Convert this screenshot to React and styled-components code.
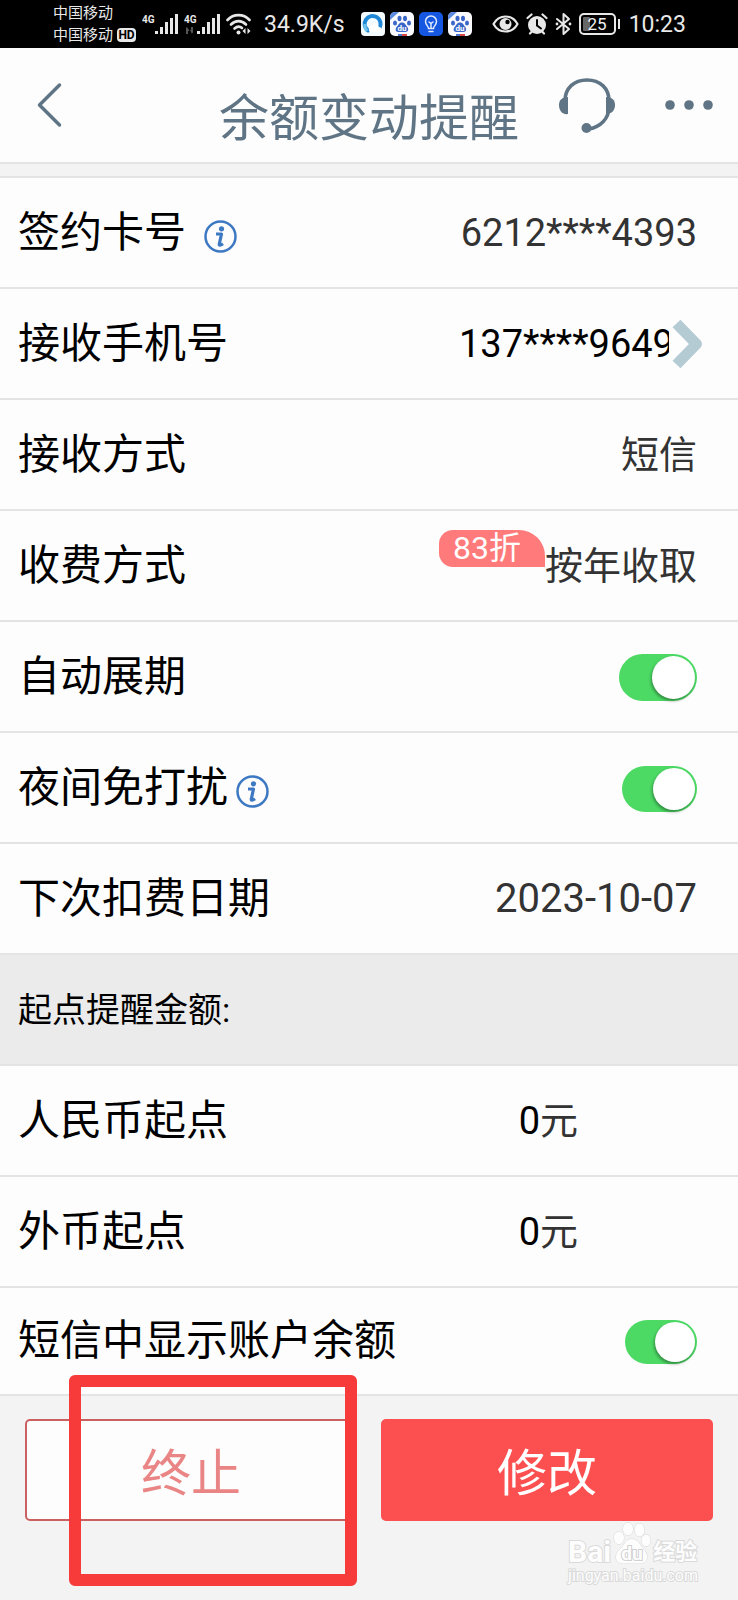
import React, { useState } from 'react';
import styled, { createGlobalStyle } from 'styled-components';

const COLOR = {
	slate: '#5f7484',
	text: '#000000',
	value: '#333333',
	line: '#e4e4e4',
	page: '#f3f3f3',
	white: '#fdfdfd',
	section: '#ebebeb',
	blue: '#3d78c2',
	green: '#4cd964',
	red: '#fc5050',
};

const App = () => {
	const [settings, setSettings] = useState({
		renew: true,
		quiet: true,
		balance: true,
	});

	const toggle = (e) => {
		const { id, checked } = e.target;
		setSettings((prev) => ({ ...prev, [id]: checked }));
	};

	return (
		<>
			<GlobalStyle />
			<StatusBar />
			<HeaderStyle>
				<IconButton type="button" aria-label="返回">
					<BackIcon />
				</IconButton>
				<h1>余额变动提醒</h1>
				<HeaderRight>
					<IconButton type="button" aria-label="客服">
						<HeadsetIcon />
					</IconButton>
					<IconButton type="button" aria-label="更多">
						<MoreIcon />
					</IconButton>
				</HeaderRight>
			</HeaderStyle>
			<main>
				<Divider />
				<Row>
					<Label $gap={18}>
						签约卡号
						<InfoButton type="button" aria-label="签约卡号说明">
							<InfoIcon />
						</InfoButton>
					</Label>
					<Value>6212****4393</Value>
				</Row>
				<Row>
					<Label>接收手机号</Label>
					<PhoneButton type="button">
						<span>137****9649</span>
						<ArrowIcon />
					</PhoneButton>
				</Row>
				<Row>
					<Label>接收方式</Label>
					<Value>短信</Value>
				</Row>
				<Row>
					<Label>收费方式</Label>
					<Discount>83折</Discount>
					<Value>按年收取</Value>
				</Row>
				<Row>
					<Label as="label" htmlFor="renew">
						自动展期
					</Label>
					<Switch
						id="renew"
						$width={78}
						$height={47}
						checked={settings.renew}
						onChange={toggle}
					/>
				</Row>
				<Row>
					<Label $gap={8}>
						<label htmlFor="quiet">夜间免打扰</label>
						<InfoButton type="button" aria-label="夜间免打扰说明">
							<InfoIcon />
						</InfoButton>
					</Label>
					<Switch
						id="quiet"
						$width={75}
						$height={46}
						checked={settings.quiet}
						onChange={toggle}
					/>
				</Row>
				<Row>
					<Label>下次扣费日期</Label>
					<Value $size={40}>2023-10-07</Value>
				</Row>
				<SectionTitle>起点提醒金额:</SectionTitle>
				<Row>
					<Label>人民币起点</Label>
					<Amount>
						<b>0</b>元
					</Amount>
				</Row>
				<Row>
					<Label>外币起点</Label>
					<Amount>
						<b>0</b>元
					</Amount>
				</Row>
				<Row $height={108}>
					<Label as="label" htmlFor="balance">
						短信中显示账户余额
					</Label>
					<Switch
						id="balance"
						$width={72}
						$height={44}
						checked={settings.balance}
						onChange={toggle}
					/>
				</Row>
			</main>
			<FooterStyle>
				<ActionButton type="button">终止</ActionButton>
				<ActionButton type="button" $primary>
					修改
				</ActionButton>
				<Highlight />
				<Watermark />
			</FooterStyle>
		</>
	);
};

export default App;

const StatusBar = () => {
	return (
		<StatusStyle>
			<StatusGroup $gap={6}>
				<Carriers>
					<span>中国移动</span>
					<span>
						中国移动<em>HD</em>
					</span>
				</Carriers>
				<SignalIcon />
				<SignalIcon data />
				<WifiIcon />
			</StatusGroup>
			<StatusText $left={13}>34.9K/s</StatusText>
			<StatusGroup $gap={5} $left={16}>
				<BrowserAppIcon />
				<PawAppIcon />
				<BulbAppIcon />
				<PawAppIcon />
			</StatusGroup>
			<StatusGroup $gap={7} $left={20}>
				<EyeIcon />
				<AlarmIcon />
				<BluetoothIcon />
				<BatteryIcon />
			</StatusGroup>
			<StatusText $left={8}>10:23</StatusText>
		</StatusStyle>
	);
};

const Switch = (props) => <SwitchStyle type="checkbox" role="switch" {...props} />;

const Watermark = () => {
	return (
		<WatermarkStyle>
			<div className="brand">
				<span className="latin">Bai</span>
				<svg width="38" height="42" viewBox="0 0 38 42">
					<g fill="#fdfdfd" stroke="#d8d8d8" strokeWidth="1">
						<ellipse cx="6" cy="16" rx="5" ry="6.5" />
						<ellipse cx="15" cy="7" rx="5" ry="6.5" />
						<ellipse cx="26.500" cy="8" rx="5" ry="6.500" />
						<ellipse cx="33" cy="18.500" rx="4.500" ry="6" />
						<path d="M19 17c4 0 7 3 9 7 2 3 6 5 6 11 0 5-4 6.500-8 6.500H12C7 41.500 3 40 3 35c0-6 5-8 7-11s4-7 9-7z" />
					</g>
					<text
						x="19"
						y="38"
						textAnchor="middle"
						fontFamily="Roboto, sans-serif"
						fontSize="19"
						fontWeight="700"
						fill="#fdfdfd"
						stroke="#cfcfcf"
						strokeWidth="2"
					>
						du
					</text>
				</svg>
				<span>经验</span>
			</div>
			<div className="site">jingyan.baidu.com</div>
		</WatermarkStyle>
	);
};

const BackIcon = () => (
	<svg width="26" height="46" viewBox="0 0 26 46" fill="none">
		<path
			d="M22.500 3L2.500 23l20 20"
			stroke={COLOR.slate}
			strokeWidth="3.500"
			strokeLinecap="round"
			strokeLinejoin="round"
		/>
	</svg>
);

const HeadsetIcon = () => (
	<svg width="56" height="56" viewBox="0 0 56 56" fill="none">
		<path
			d="M6 24C6 11 15 3 28 3s22 8 22 21v6c0 12-9 20-20 22"
			stroke={COLOR.slate}
			strokeWidth="3.500"
		/>
		<path d="M9 20v17C3 38 0 33 0 28s3-8 9-8z" fill={COLOR.slate} />
		<path d="M47 20v17c6 0 9-4 9-9s-3-8-9-8z" fill={COLOR.slate} />
		<circle cx="27.500" cy="51" r="5" fill={COLOR.slate} />
	</svg>
);

const MoreIcon = () => (
	<svg width="48" height="10" viewBox="0 0 48 10" fill={COLOR.slate}>
		<circle cx="5" cy="5" r="4.800" />
		<circle cx="24" cy="5" r="4.800" />
		<circle cx="43" cy="5" r="4.800" />
	</svg>
);

const InfoIcon = () => (
	<svg width="33" height="33" viewBox="0 0 33 33" fill="none">
		<circle cx="16.500" cy="16.500" r="15" stroke={COLOR.blue} strokeWidth="2.500" />
		<circle cx="17.500" cy="8.800" r="2.600" fill={COLOR.blue} />
		<path
			d="M12 14h5.500l-2.200 10c-.3 1.800 1 1.600 3.700-.3"
			stroke={COLOR.blue}
			strokeWidth="3.200"
			strokeLinejoin="round"
		/>
	</svg>
);

const ArrowIcon = () => (
	<svg width="31" height="50" viewBox="0 0 31 50" fill="none">
		<path
			d="M4.500 4.500L24.500 25 4.500 45.500"
			stroke="#b4cbd4"
			strokeWidth="11"
			strokeLinejoin="round"
		/>
	</svg>
);

const SignalIcon = ({ data }) => (
	<svg width="36" height="22" viewBox="0 0 36 22" fill="#e8e8e8">
		<text x="0" y="10" fontFamily="Roboto, sans-serif" fontSize="10" fontWeight="700">
			4G
		</text>
		{data && <path d="M3 14l2.500 4H4v3H2v-6zM8 21l-2-4h1v-3h2v5z" fill="#555" />}
		<rect x="13" y="18" width="3" height="3" />
		<rect x="18" y="14" width="3" height="7" />
		<rect x="23" y="9" width="3" height="12" />
		<rect x="28" y="5" width="3" height="16" />
		<rect x="33" y="1" width="3" height="20" />
	</svg>
);

const WifiIcon = () => (
	<svg width="25" height="22" viewBox="0 0 25 22" fill="none">
		<g stroke="#e8e8e8" strokeWidth="2.600" strokeLinecap="round">
			<path d="M1.500 7c6-6.500 16-6.500 22 0" />
			<path d="M5 11.500c4.500-4.500 10.500-4.500 15 0" />
			<path d="M8.500 15.500c2.500-2.300 5.500-2.300 7.500-.5" />
		</g>
		<circle cx="12.500" cy="19.500" r="2" fill="#e8e8e8" />
		<path d="M19.500 15v6l-3-3zM21.500 15v6l3-3z" fill="#e8e8e8" />
	</svg>
);

const BrowserAppIcon = () => (
	<svg width="24" height="24" viewBox="0 0 24 24">
		<rect width="24" height="24" rx="4" fill="#f4fbff" />
		<path
			d="M18.500 16A8 8 0 1 0 7 18.500"
			fill="none"
			stroke="#1f87d6"
			strokeWidth="4"
			strokeLinecap="round"
		/>
		<path d="M6 19a8 8 0 0 1-2-7" fill="none" stroke="#6fc4ee" strokeWidth="3" />
		<path d="M9 20a3.500 3.500 0 0 1 1-6 4.500 4.500 0 0 1 8 1 3 3 0 0 1 2 5z" fill="#fff" />
	</svg>
);

const PawAppIcon = () => (
	<svg width="24" height="24" viewBox="0 0 24 24">
		<rect width="24" height="24" rx="5" fill="#fbfbff" />
		<path d="M0 8V5a5 5 0 0 1 5-5h4z" fill="#5b8ae0" />
		<g fill="#3a66c8">
			<ellipse cx="5" cy="11" rx="2" ry="2.600" />
			<ellipse cx="9.500" cy="6.500" rx="2" ry="2.800" />
			<ellipse cx="15" cy="6.500" rx="2" ry="2.800" />
			<ellipse cx="19" cy="11" rx="2" ry="2.600" />
			<path d="M12 10.500c3 0 3.500 2.500 5 4s2 5.500-1.500 5.500h-7C5 20 5 16.500 7 14.500s2-4 5-4z" />
		</g>
		<text
			x="12"
			y="19"
			textAnchor="middle"
			fontFamily="Roboto, sans-serif"
			fontSize="8"
			fontWeight="700"
			fill="#fff"
		>
			du
		</text>
		<rect x="8" y="22" width="4" height="2" fill="#4d73c9" />
		<rect x="12" y="22" width="5" height="2" fill="#d84848" />
	</svg>
);

const BulbAppIcon = () => (
	<svg width="24" height="24" viewBox="0 0 24 24" fill="none">
		<rect width="24" height="24" rx="5" fill="#1557e0" />
		<g stroke="#dfeaff" strokeWidth="1.500" strokeLinecap="round">
			<path d="M9.500 16.500c0-2.500-3-3.500-3-7a5.500 5.500 0 0 1 11 0c0 3.500-3 4.500-3 7z" />
			<path d="M12 16v-5M10 10l2 1.500 2-1.500M10 19.500h4" />
		</g>
	</svg>
);

const EyeIcon = () => (
	<svg width="27" height="20" viewBox="0 0 27 20" fill="none">
		<path
			d="M1.500 10C7 0 20 0 25.500 10 20 20 7 20 1.500 10z"
			stroke="#e8e8e8"
			strokeWidth="2.200"
			strokeLinejoin="round"
		/>
		<circle cx="13.500" cy="10" r="6" fill="#e8e8e8" />
		<circle cx="15.500" cy="8" r="2.200" fill="#000" />
	</svg>
);

const AlarmIcon = () => (
	<svg width="22" height="22" viewBox="0 0 22 22" fill="none">
		<circle cx="11" cy="12" r="9" fill="#e8e8e8" />
		<g stroke="#e8e8e8" strokeWidth="2.200" strokeLinecap="round">
			<path d="M1.500 5L5.500 1.500M20.500 5l-4-3.500M4 20.500l2-2M18 20.500l-2-2" />
		</g>
		<path d="M11 7v5.500l4 3" stroke="#000" strokeWidth="2" strokeLinecap="round" />
	</svg>
);

const BluetoothIcon = () => (
	<svg width="17" height="24" viewBox="0 0 17 24" fill="none">
		<path
			d="M2 7l12 10-5.500 5V2L14 7 2 17"
			stroke="#e8e8e8"
			strokeWidth="2"
			strokeLinejoin="round"
			strokeLinecap="round"
		/>
		<circle cx="2" cy="12" r="1.400" fill="#e8e8e8" />
		<circle cx="15" cy="12" r="1.400" fill="#e8e8e8" />
	</svg>
);

const BatteryIcon = () => (
	<svg width="42" height="22" viewBox="0 0 42 22">
		<rect
			x="1"
			y="1"
			width="35"
			height="20"
			rx="4"
			fill="none"
			stroke="#e8e8e8"
			strokeWidth="2"
		/>
		<rect x="4" y="4" width="7" height="14" rx="1" fill="#666" />
		<rect x="39" y="6" width="2" height="10" fill="#e8e8e8" />
		<text
			x="18"
			y="17"
			textAnchor="middle"
			fontFamily="Roboto, sans-serif"
			fontSize="17"
			fill="#f0f0f0"
		>
			25
		</text>
	</svg>
);

const GlobalStyle = createGlobalStyle`
	* {
		box-sizing: border-box;
	}

	body {
		margin: 0;
		background-color: ${COLOR.page};
		color: ${COLOR.text};
		font-family: Roboto, 'Noto Sans CJK SC', sans-serif;
	}

	button {
		font-family: inherit;
		cursor: pointer;
	}

	svg {
		display: block;
		flex-shrink: 0;
	}
`;

const StatusStyle = styled.div`
	display: flex;
	align-items: center;
	height: 48px;
	padding-left: 53px;
	background-color: #000;
	color: #e8e8e8;
	white-space: nowrap;
`;

const StatusGroup = styled.div`
	display: flex;
	align-items: center;
	gap: ${({ $gap }) => $gap}px;
	margin-left: ${({ $left }) => $left || 0}px;
`;

const StatusText = styled.span`
	margin-left: ${({ $left }) => $left}px;
	padding-top: 2px;
	font-size: 23px;
	line-height: 28px;
`;

const Carriers = styled.div`
	display: flex;
	flex-direction: column;
	font-size: 15px;
	line-height: 22px;

	span {
		display: flex;
		align-items: center;
		gap: 4px;
	}

	em {
		width: 19px;
		border-radius: 4px;
		background-color: #e8e8e8;
		color: #000;
		font-size: 12px;
		font-style: normal;
		font-weight: 700;
		line-height: 14px;
		text-align: center;
	}
`;

const HeaderStyle = styled.header`
	display: grid;
	grid-template-columns: 1fr auto 1fr;
	align-items: center;
	height: 116px;
	padding: 0 25px 0 37px;
	border-bottom: 2px solid ${COLOR.line};
	background-color: ${COLOR.white};

	h1 {
		margin: 0;
		padding: 28px 12px 0 0;
		color: ${COLOR.slate};
		font-size: 50px;
		font-weight: 400;
		line-height: 60px;
	}
`;

const HeaderRight = styled.div`
	display: flex;
	align-items: center;
	justify-content: flex-end;
	gap: 50px;
`;

const IconButton = styled.button`
	justify-self: start;
	padding: 0;
	border: 0;
	background: none;
`;

const InfoButton = styled(IconButton)`
	padding-top: 7px;
`;

const Divider = styled.div`
	height: 14px;
	border-bottom: 2px solid ${COLOR.line};
`;

const Row = styled.div`
	display: flex;
	align-items: center;
	height: ${({ $height }) => $height || 111}px;
	padding: 0 41px 0 18px;
	border-bottom: 2px solid ${COLOR.line};
	background-color: ${COLOR.white};
	white-space: nowrap;
`;

const Label = styled.div`
	display: flex;
	align-items: center;
	gap: ${({ $gap }) => $gap || 0}px;
	margin-right: auto;
	font-size: 42px;
	line-height: 56px;
`;

const Value = styled.span`
	color: ${COLOR.value};
	font-size: ${({ $size }) => $size || 38}px;
	line-height: 48px;
`;

const PhoneButton = styled.button`
	display: flex;
	align-items: center;
	gap: 3px;
	margin-right: -6px;
	padding: 0;
	border: 0;
	background: none;
	color: ${COLOR.text};
	font-size: 38px;
	line-height: 48px;

	span {
		width: 210px;
		overflow: hidden;
		text-align: left;
	}
`;

const Discount = styled.span`
	align-self: flex-start;
	margin-top: 19px;
	padding: 0 24px 0 14px;
	border-radius: 14px 26px 0 14px;
	background-color: #ff7b7b;
	color: #fff;
	font-size: 32px;
	line-height: 37px;
`;

const Amount = styled.span`
	margin-right: 119px;
	color: ${COLOR.value};
	font-size: 38px;
	line-height: 48px;

	b {
		color: ${COLOR.text};
		font-weight: 400;
	}
`;

const SwitchStyle = styled.input`
	appearance: none;
	display: flex;
	width: ${({ $width }) => $width}px;
	height: ${({ $height }) => $height}px;
	margin: 2px 0 0;
	padding: 2px;
	border-radius: 24px;
	background-color: #d8d8d8;
	cursor: pointer;

	&::before {
		content: '';
		height: 100%;
		aspect-ratio: 1;
		border-radius: 50%;
		background-color: #fff;
		box-shadow: -1px 2px 3px rgba(0, 0, 0, 0.35);
	}

	&:checked {
		justify-content: flex-end;
		background-color: ${COLOR.green};
	}
`;

const SectionTitle = styled.h2`
	display: flex;
	align-items: center;
	height: 111px;
	margin: 0;
	padding: 0 18px;
	border-bottom: 2px solid ${COLOR.line};
	background-color: ${COLOR.section};
	font-size: 34px;
	font-weight: 400;
	line-height: 48px;
`;

const FooterStyle = styled.footer`
	position: relative;
	display: flex;
	gap: 24px;
	padding: 23px 25px 79px;
`;

const ActionButton = styled.button`
	flex: 1;
	height: 102px;
	padding: 8px 0 0;
	border: 2px solid ${({ $primary }) => ($primary ? COLOR.red : '#cb6060')};
	border-radius: 5px;
	background-color: ${({ $primary }) => ($primary ? COLOR.red : COLOR.white)};
	color: ${({ $primary }) => ($primary ? '#fff' : '#e98585')};
	font-size: 50px;
	line-height: 60px;
`;

const Highlight = styled.div`
	position: absolute;
	top: -21px;
	left: 69px;
	width: 288px;
	height: 211px;
	border: 12px solid #f73a3a;
	border-radius: 6px;
	pointer-events: none;
`;

const WatermarkStyle = styled.div`
	position: absolute;
	top: 126px;
	right: 40px;
	color: #fdfdfd;
	-webkit-text-stroke: 2px #dadada;
	paint-order: stroke fill;

	.brand {
		display: flex;
		align-items: flex-end;
		gap: 2px;
		font-size: 22px;
		font-weight: 700;
		line-height: 24px;

		text {
			paint-order: stroke fill;
		}
	}

	.latin {
		font-size: 30px;
	}

	.site {
		font-size: 16px;
		line-height: 24px;
	}
`;
